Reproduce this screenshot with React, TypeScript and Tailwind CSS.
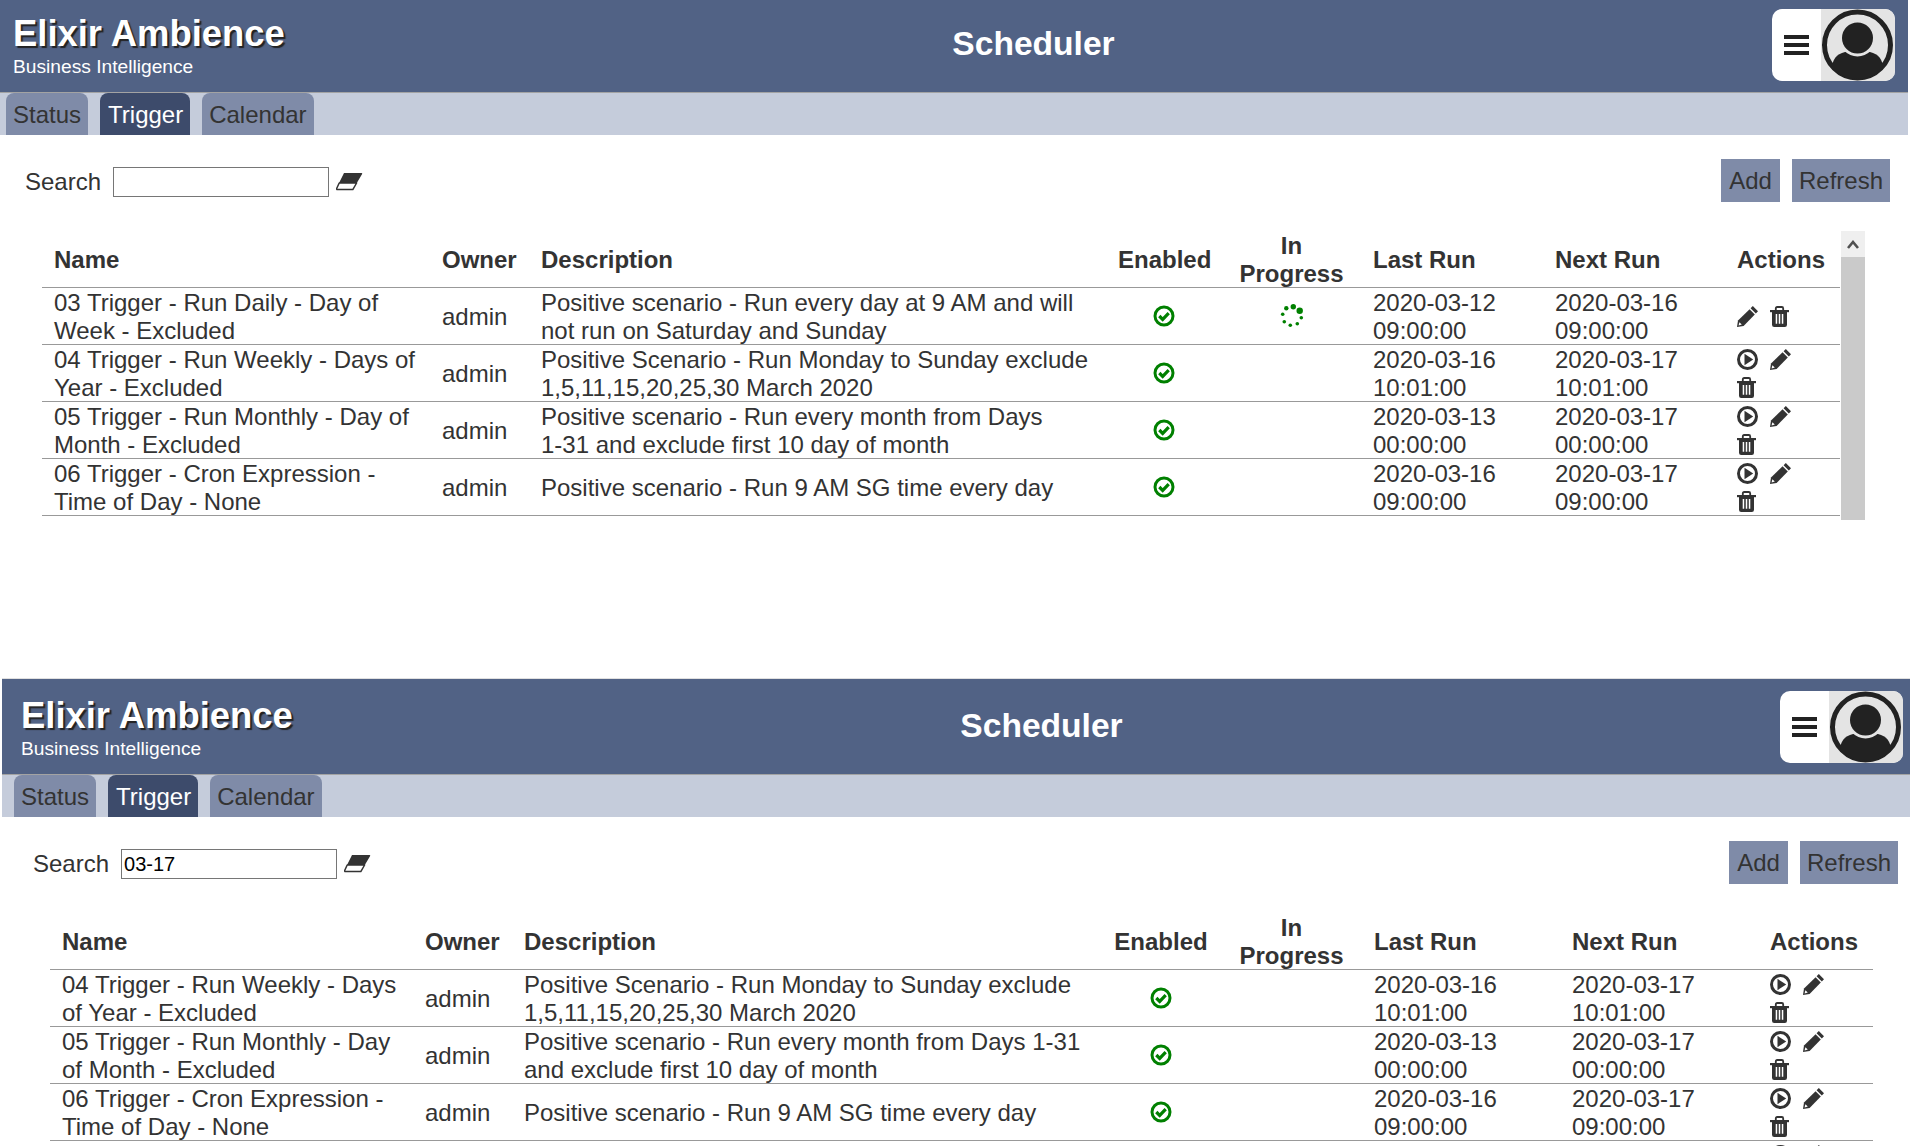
import type { ReactNode } from "react";

const Check = () => (
  <svg width="22" height="22" viewBox="0 0 22 22" className="block">
    <circle cx="11" cy="11" r="9" fill="none" stroke="#008000" strokeWidth="3" />
    <path d="M6.3 11l3.4 3.4 6-6.2" fill="none" stroke="#008000" strokeWidth="3.2" />
  </svg>
);

const Spinner = () => (
  <svg width="24" height="26" viewBox="0 0 24 26" className="block" fill="#008000">
    <circle cx="13.3" cy="3.7" r="2.7" />
    <circle cx="19.7" cy="7.7" r="3.2" />
    <circle cx="6.3" cy="5.3" r="2.2" />
    <circle cx="2.7" cy="11.3" r="1.8" />
    <circle cx="4.3" cy="18.7" r="1.8" />
    <circle cx="10.3" cy="22.3" r="1.8" />
    <circle cx="17.3" cy="20.7" r="1.8" />
    <circle cx="21.3" cy="14.7" r="1.8" />
  </svg>
);

const Play = () => (
  <svg width="21" height="21" viewBox="0 0 21 21" className="block">
    <circle cx="10.5" cy="10.5" r="9" fill="none" stroke="#333" strokeWidth="3" />
    <path d="M7.5 4.8L16.2 10.5 7.5 16.2z" fill="#333" />
  </svg>
);

const Pencil = () => (
  <svg width="21" height="21" viewBox="0 0 21 21" className="block">
    <path d="M15.8 0L21 5.2 18.8 7.4 13.6 2.2z" fill="#333" />
    <path d="M12.6 3.2L17.8 8.4 6.6 20 0 21 1 14.4z" fill="#333" />
    <path d="M2.4 16.2L4.8 18.6 1.6 19.4z" fill="#fff" />
  </svg>
);

const Trash = () => (
  <svg width="19" height="21" viewBox="0 0 19 21" className="block">
    <path d="M0 4h19v2.2H0z" fill="#333" />
    <path d="M5.8 4.5V2.4Q5.8 1 7.2 1h4.6q1.4 0 1.4 1.4v2.1" fill="none" stroke="#333" strokeWidth="1.8" />
    <path d="M2 5.5h15v13.3q0 2.2-2.2 2.2H4.2Q2 21 2 18.8z" fill="#333" />
    <path d="M5.7 8h1.5v9.8H5.7zM8.75 8h1.5v9.8h-1.5zM11.8 8h1.5v9.8h-1.5z" fill="#fff" />
  </svg>
);

const Eraser = () => (
  <svg width="27" height="19" viewBox="0 0 27 19" className="block">
    <path d="M8 1H25.5Q26.8 1 26 2.2L20.8 11H3z" fill="#333" />
    <path d="M3.2 11H20.6L16.8 17.6H1.5Q.2 17.6 .9 16z" fill="#fff" stroke="#333" strokeWidth="1.5" strokeLinejoin="round" />
  </svg>
);

const Avatar = () => (
  <svg width="74" height="72" viewBox="0 0 74 72" className="block">
    <circle cx="36.5" cy="36" r="33" fill="#e4e4e4" stroke="#222" strokeWidth="5" />
    <path d="M11 60Q11 46 24 43L49 43Q62 46 62 60Q50 70 36.5 70Q23 70 11 60z" fill="#222" />
    <circle cx="36.5" cy="29" r="18.5" fill="#e4e4e4" />
    <circle cx="36.5" cy="29" r="15.5" fill="#222" />
  </svg>
);

const HeaderBar = () => (
  <div className="flex h-[97px] items-start bg-[#516285] border-t border-b border-t-[#e0e0e0] border-b-[#a3a3a3]">
    <div className="w-[301px] shrink-0 pl-[19px] pt-[15px] text-white whitespace-nowrap">
      <div className="text-[36.4px] leading-[44px] font-bold [text-shadow:2px_2px_1px_#222]">Elixir Ambience</div>
      <div className="text-[19.2px] leading-[22px]">Business Intelligence</div>
    </div>
    <div className="flex-1 text-center text-[33.6px] leading-[40px] font-bold text-white pt-[27px]">Scheduler</div>
    <div className="flex h-[72px] w-[123px] mt-[12px] mr-[13px] shrink-0 rounded-[10px] overflow-hidden bg-white">
      <div className="w-[49px] flex flex-col justify-center items-center gap-[4px]">
        <span className="block w-[25px] h-[4px] bg-[#222]" />
        <span className="block w-[25px] h-[4px] bg-[#222]" />
        <span className="block w-[25px] h-[4px] bg-[#222]" />
      </div>
      <div className="flex-1 bg-[#e4e4e4]">
        <Avatar />
      </div>
    </div>
  </div>
);

const TabBar = () => (
  <div className="flex h-[42px] bg-[#c5ccdb] pl-[12px] gap-[12px] items-start text-[24px] leading-[44px]">
    <div className="h-[42px] px-[7px] rounded-t-[8px] bg-[#7f8ba8] text-[#333]">Status</div>
    <div className="h-[42px] pl-[8px] pr-[7px] rounded-t-[8px] bg-[#3d4b6b] text-white">Trigger</div>
    <div className="h-[42px] px-[7px] rounded-t-[8px] bg-[#7f8ba8] text-[#333]">Calendar</div>
  </div>
);

const Toolbar = ({ value }: { value: string }) => (
  <div className="flex h-[95px] justify-between pl-[31px] pr-[18px] pt-[24px]">
    <div className="flex items-center h-[46px] text-[24px] text-[#333]">
      <span>Search</span>
      <input
        readOnly
        value={value}
        className="ml-[12px] w-[216px] h-[30px] border border-[#767676] bg-white px-[2px] text-[20px] text-black outline-none"
      />
      <span className="ml-[7px] mb-[2px]">
        <Eraser />
      </span>
    </div>
    <div className="flex gap-[12px] text-[24px] text-[#333]">
      <button className="h-[43px] px-[8px] bg-[#7f8ba8]">Add</button>
      <button className="h-[43px] px-[7px] bg-[#7f8ba8]">Refresh</button>
    </div>
  </div>
);

type Row = {
  name: string;
  description: ReactNode;
  last: [string, string];
  next: [string, string];
  running?: boolean;
  hidePlay?: boolean;
};

const Actions = ({ hidePlay }: { hidePlay?: boolean }) => (
  <div className="flex flex-wrap w-[76px]">
    {!hidePlay && (
      <span className="flex items-center h-[28px] w-[33px]">
        <Play />
      </span>
    )}
    <span className="flex items-center h-[28px] w-[33px]">
      <Pencil />
    </span>
    <span className="flex items-center h-[28px] w-[33px]">
      <Trash />
    </span>
  </div>
);

const th = "px-[12px] pt-[1px] font-bold border-b border-[#999]";
const td = "px-[12px] h-[57px] py-0 border-b border-[#999]";
const nudge = "translate-y-[1px]";

const DataTable = ({ widths, rows, width, extraRow }: { widths: number[]; rows: Row[]; width: number; extraRow?: boolean }) => (
  <table className="table-fixed border-separate border-spacing-0 text-[24px] leading-[28px] text-[#333]" style={{ width }}>
    <colgroup>
      {widths.map((w, i) => (
        <col key={i} style={{ width: w }} />
      ))}
    </colgroup>
    <thead>
      <tr>
        <th className={`${th} text-left`}><div className={nudge}>Name</div></th>
        <th className={`${th} text-left`}><div className={nudge}>Owner</div></th>
        <th className={`${th} text-left`}><div className={nudge}>Description</div></th>
        <th className={`${th} text-center`}><div className={nudge}>Enabled</div></th>
        <th className={`${th} text-center`}><div className={nudge}>In Progress</div></th>
        <th className={`${th} text-left`}><div className={nudge}>Last Run</div></th>
        <th className={`${th} text-left`}><div className={nudge}>Next Run</div></th>
        <th className={`${th} text-left`}><div className={nudge}>Actions</div></th>
      </tr>
    </thead>
    <tbody>
      {rows.map((r) => (
        <tr key={r.name}>
          <td className={td}><div className={nudge}>{r.name}</div></td>
          <td className={td}><div className={nudge}>admin</div></td>
          <td className={td}><div className={nudge}>{r.description}</div></td>
          <td className={td}>
            <div className="flex justify-center">
              <Check />
            </div>
          </td>
          <td className={td}>
            <div className="flex justify-center">{r.running && <Spinner />}</div>
          </td>
          <td className={td}>
            <div className={nudge}>
              {r.last[0]}
              <br />
              {r.last[1]}
            </div>
          </td>
          <td className={td}>
            <div className={nudge}>
              {r.next[0]}
              <br />
              {r.next[1]}
            </div>
          </td>
          <td className={td}>
            <Actions hidePlay={r.hidePlay} />
          </td>
        </tr>
      ))}
      {extraRow && (
        <tr>
          <td colSpan={7} />
          <td className="px-[12px]">
            <Actions />
          </td>
        </tr>
      )}
    </tbody>
  </table>
);

const r3: Row = {
  name: "03 Trigger - Run Daily - Day of Week - Excluded",
  description: "Positive scenario - Run every day at 9 AM and will not run on Saturday and Sunday",
  last: ["2020-03-12", "09:00:00"],
  next: ["2020-03-16", "09:00:00"],
  running: true,
  hidePlay: true,
};
const r4: Row = {
  name: "04 Trigger - Run Weekly - Days of Year - Excluded",
  description: "Positive Scenario - Run Monday to Sunday exclude 1,5,11,15,20,25,30 March 2020",
  last: ["2020-03-16", "10:01:00"],
  next: ["2020-03-17", "10:01:00"],
};
const r5: Row = {
  name: "05 Trigger - Run Monthly - Day of Month - Excluded",
  description: (
    <>
      Positive scenario - Run every month from Days <span className="whitespace-nowrap">1-31</span> and exclude first 10 day of month
    </>
  ),
  last: ["2020-03-13", "00:00:00"],
  next: ["2020-03-17", "00:00:00"],
};
const r6: Row = {
  name: "06 Trigger - Cron Expression - Time of Day - None",
  description: "Positive scenario - Run 9 AM SG time every day",
  last: ["2020-03-16", "09:00:00"],
  next: ["2020-03-17", "09:00:00"],
};

export default function App() {
  return (
    <div className="w-[1910px] h-[1146px] overflow-hidden bg-white font-['Liberation_Sans',Arial,sans-serif]">
      <div className="w-[1914px] h-[682px] -ml-[6px] -mt-[4px]">
        <HeaderBar />
        <TabBar />
        <Toolbar value="" />
        <div className="flex items-start ml-[48px]">
          <DataTable widths={[388, 99, 577, 116, 139, 182, 182, 115]} rows={[r3, r4, r5, r6]} width={1798} />
          <div className="w-[24px] h-[289px] mt-[1px] ml-[1px] bg-[#cacaca]">
            <div className="flex h-[26px] items-center justify-center bg-[#efefef]">
              <svg width="12" height="9" viewBox="0 0 12 9">
                <path d="M1 8L6 2l5 6" fill="none" stroke="#505050" strokeWidth="2.6" />
              </svg>
            </div>
          </div>
        </div>
      </div>
      <div className="w-[1914px] ml-[2px]">
        <HeaderBar />
        <TabBar />
        <Toolbar value="03-17" />
        <div className="ml-[48px]">
          <DataTable widths={[363, 99, 589, 120, 141, 198, 198, 115]} rows={[r4, r5, r6]} width={1823} extraRow />
        </div>
      </div>
    </div>
  );
}
